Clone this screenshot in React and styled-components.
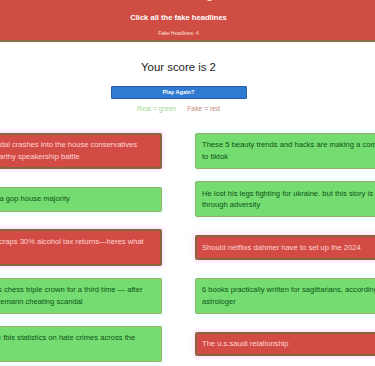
import React from 'react';
import styled, { createGlobalStyle } from 'styled-components';

const Global = createGlobalStyle`
  html, body { margin: 0; padding: 0; background: #ffffff; overflow-x: hidden; }
  body { font-family: "Liberation Sans", Arial, Helvetica, sans-serif; }
`;

const Page = styled.div`
  width: 375px;
  min-height: 366px;
  overflow: hidden;
`;

const Header = styled.header`
  box-sizing: border-box;
  height: 42px;
  background: #d04d44;
  border-bottom: 2px solid #86714a;
  padding-right: 18px;
  display: flex;
  flex-direction: column;
  align-items: center;
  color: #ffffff;
`;

const Title = styled.h1`
  margin: -10.3px 0 0;
  font-size: 10px;
  line-height: 12px;
  font-weight: bold;
  color: #ffe6e2;
`;

const Subtitle = styled.p`
  margin: 11.6px 0 0;
  font-size: 7.6px;
  line-height: 10px;
  font-weight: bold;
`;

const Counter = styled.p`
  margin: 7px 0 0;
  font-size: 5px;
  line-height: 6px;
  color: #ffe0dc;
`;

const Main = styled.main`
  padding-right: 18px;
  display: flex;
  flex-direction: column;
  align-items: center;
`;

const Score = styled.h2`
  margin: 18px 0 0;
  font-size: 11.4px;
  line-height: 14px;
  font-weight: normal;
  color: #222222;
`;

const PlayButton = styled.button`
  box-sizing: border-box;
  margin-top: 12px;
  width: 136px;
  height: 12.5px;
  padding: 0;
  background: #2f7bd2;
  border: 1px solid #2b5fae;
  border-radius: 1px;
  color: #ffffff;
  font-family: "Liberation Sans", Arial, sans-serif;
  font-size: 5.6px;
  font-weight: bold;
`;

const Legend = styled.div`
  margin-top: 5.3px;
  display: flex;
  gap: 11px;
  font-size: 6.8px;
  line-height: 9px;
`;

const LegendItem = styled.span`
  color: ${p => p.$color};
`;

const Grid = styled.div`
  margin-top: 20.2px;
  width: 509px;
  flex-shrink: 0;
  display: grid;
  grid-template-columns: repeat(2, 238px);
  column-gap: 33px;
  row-gap: 12px;
  align-items: center;
`;

const Card = styled.div`
  box-sizing: border-box;
  border-radius: 2px;
  font-size: 7.6px;
  line-height: 11.6px;
  border: ${p => (p.$fake ? '2px solid #86683f' : '1px solid #a6ac68')};
  padding: ${p => (p.$fake ? '4.5px 5px' : '5.5px 6px')};
  background: ${p => (p.$fake ? '#d24c45' : '#74dc71')};
  color: ${p => (p.$fake ? '#ffd4d4' : '#0f5317')};
  box-shadow: ${p =>
    p.$fake
      ? '0 0 5px 1px rgba(255, 170, 255, 0.45)'
      : '0 0 5px 1px rgba(150, 255, 255, 0.35)'};
`;

const headlines = [
  { text: 'The new trump scandal crashes into the house conservatives rebellion during mccarthy speakership battle', fake: true },
  { text: 'These 5 beauty trends and hacks are making a comeback thanks to tiktok', fake: false },
  { text: 'Voters could deliver a gop house majority', fake: false },
  { text: 'He lost his legs fighting for ukraine. but this story is about triumph through adversity', fake: false },
  { text: 'Dutch government scraps 30% alcohol tax returns\u2014heres what you need to know', fake: true },
  { text: 'Should netflixs dahmer have to set up the 2024', fake: true },
  { text: 'Magnus carlsen wins chess triple crown for a third time \u2014 after weeks of the hans niemann cheating scandal', fake: false },
  { text: '6 books practically written for sagittarians, according to an astrologer', fake: false },
  { text: 'A closer look into the fbis statistics on hate crimes across the country', fake: false },
  { text: 'The u.s.saudi relationship', fake: true },
];

export default function App() {
  const fakeCount = headlines.filter(h => h.fake).length;
  return (
    <Page>
      <Global />
      <Header>
        <Title>Fact Checking</Title>
        <Subtitle>Click all the fake headlines</Subtitle>
        <Counter>Fake Headlines: {fakeCount}</Counter>
      </Header>
      <Main>
        <Score>Your score is 2</Score>
        <PlayButton>Play Again?</PlayButton>
        <Legend>
          <LegendItem $color="#a3d993">Real = green</LegendItem>
          <LegendItem $color="#c58a80">Fake = red</LegendItem>
        </Legend>
        <Grid>
          {headlines.map((h, i) => (
            <Card key={i} $fake={h.fake}>{h.text}</Card>
          ))}
        </Grid>
      </Main>
    </Page>
  );
}
